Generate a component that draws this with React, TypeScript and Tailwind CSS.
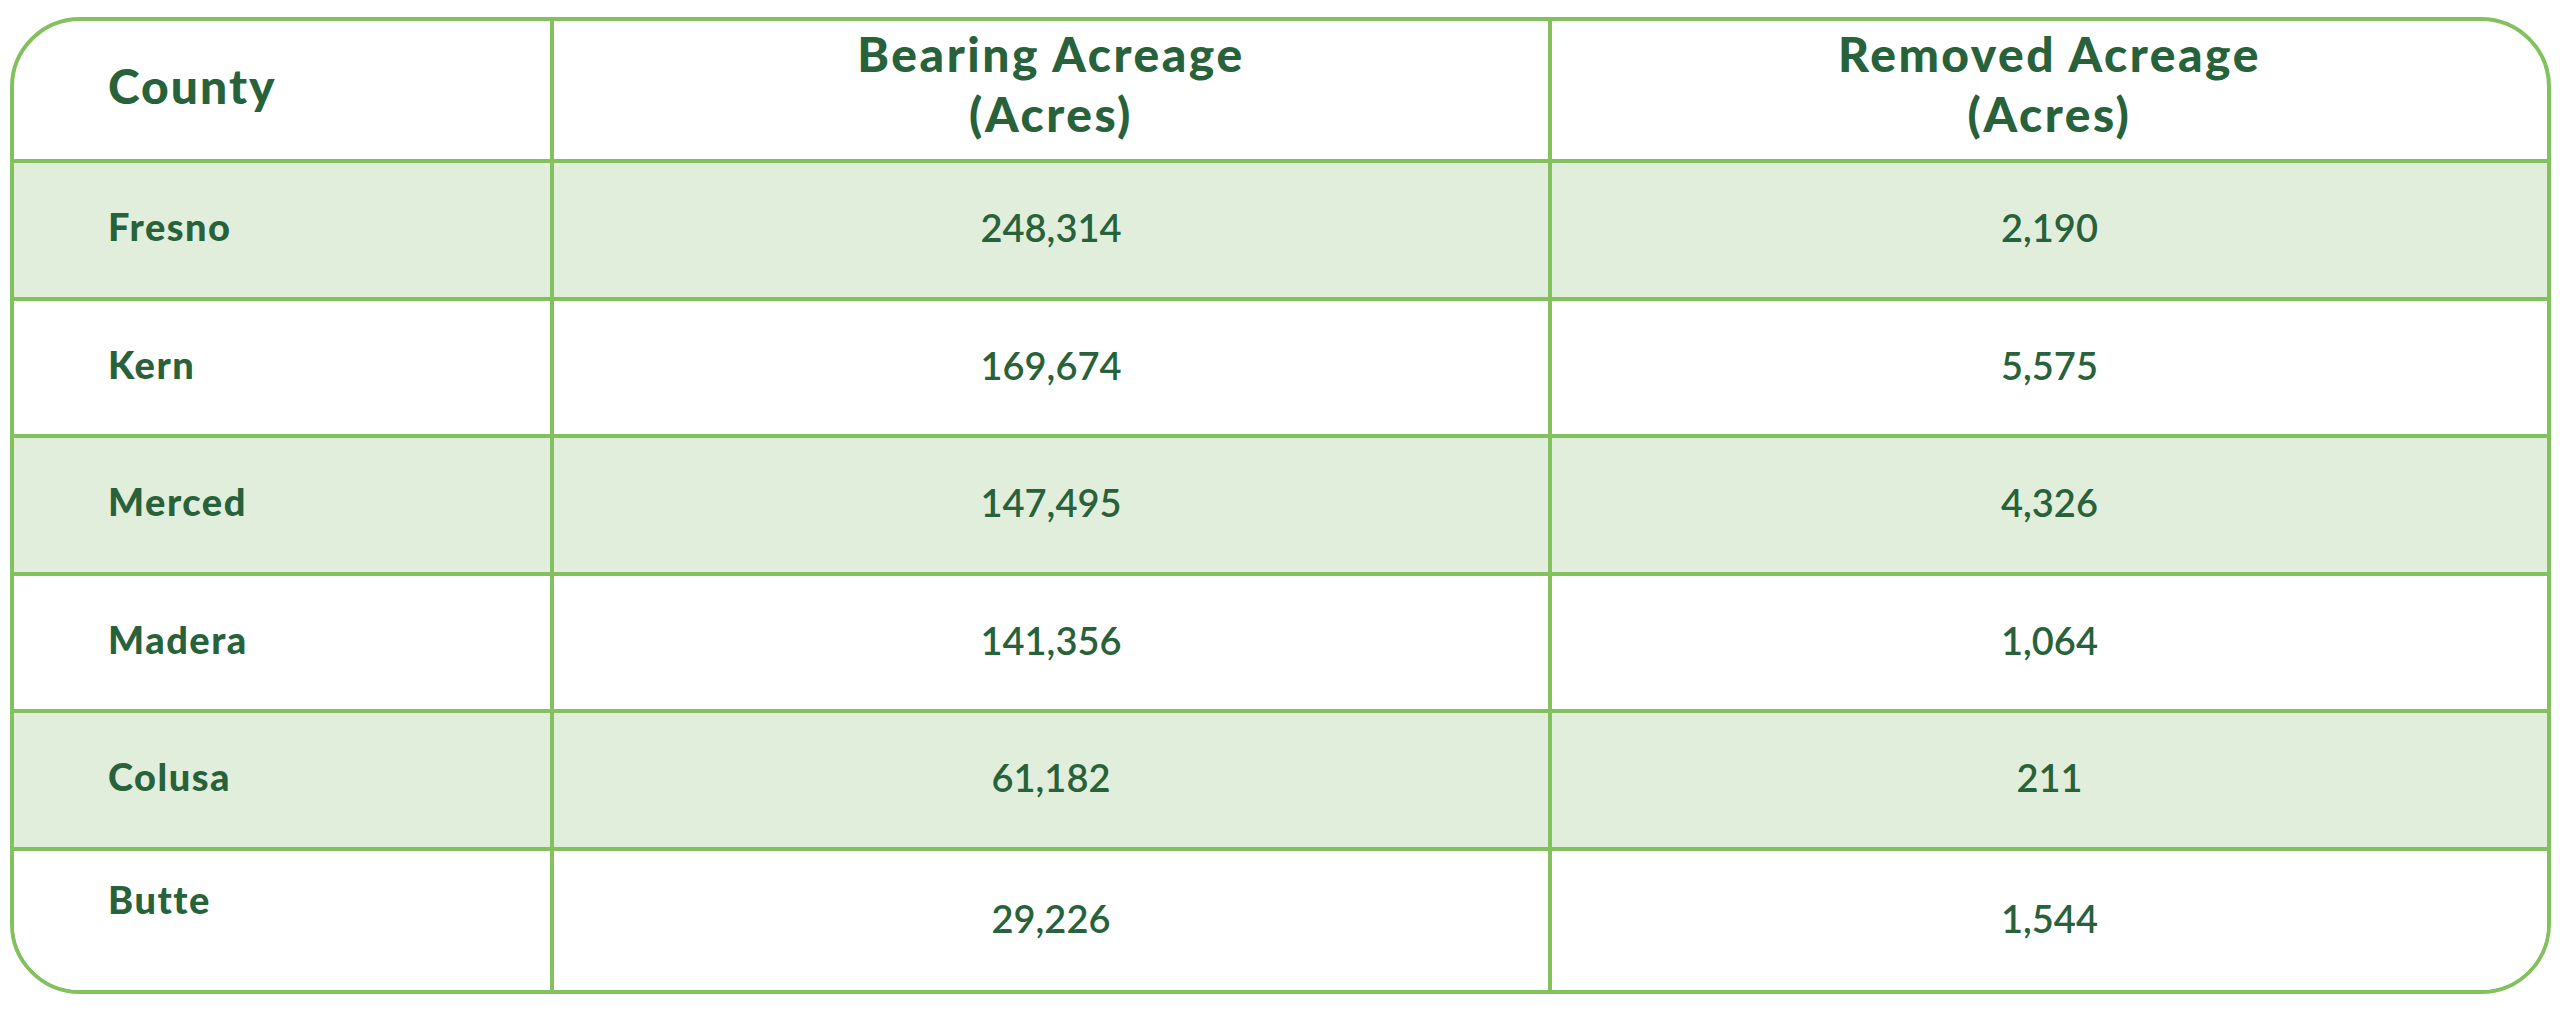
import React from 'react'

const rows = [
  { county: 'Fresno', bearing: '248,314', removed: '2,190' },
  { county: 'Kern', bearing: '169,674', removed: '5,575' },
  { county: 'Merced', bearing: '147,495', removed: '4,326' },
  { county: 'Madera', bearing: '141,356', removed: '1,064' },
  { county: 'Colusa', bearing: '61,182', removed: '211' },
  { county: 'Butte', bearing: '29,226', removed: '1,544' },
]

export default function App() {
  return (
    <div className="min-h-screen bg-white pt-[17px] pl-[10px] text-[#28623a]" style={{ fontFamily: 'Lato, "Open Sans", sans-serif' }}>
      <div className="w-[2541px] overflow-hidden rounded-[70px] border-[4px] border-[#83c15f]">
        {/* header */}
        <div className="grid h-[138px] grid-cols-[540px_998px_1fr]">
          <div className="flex items-center border-r-[4px] border-[#83c15f] pl-[94px] pb-[8px] text-[48px] font-black tracking-[2px]">County</div>
          <div className="flex flex-col items-center justify-center border-r-[4px] border-[#83c15f] pb-[12px] text-[48px] font-black leading-[60px] tracking-[2.5px]">
            <span>Bearing Acreage</span>
            <span>(Acres)</span>
          </div>
          <div className="flex flex-col items-center justify-center pb-[12px] text-[48px] font-black leading-[60px] tracking-[2.5px]">
            <span>Removed Acreage</span>
            <span>(Acres)</span>
          </div>
        </div>

        {rows.map((r, i) => {
          const last = i === rows.length - 1
          return (
            <div
              key={r.county}
              className={`grid grid-cols-[540px_998px_1fr] border-t-[4px] border-[#83c15f] ${i % 2 === 0 ? 'bg-[#e2eedc]' : 'bg-white'} ${last ? 'h-[143px]' : 'h-[137.5px]'}`}
            >
              <div className={`flex border-r-[4px] border-[#83c15f] pl-[94px] text-[38px] font-black tracking-[1.5px] ${last ? 'items-start pt-[20px]' : 'items-center pb-[6px]'}`}>
                {r.county}
              </div>
              <div className="flex items-center justify-center border-r-[4px] border-[#83c15f] pb-[4px] text-[38px] font-semibold">{r.bearing}</div>
              <div className="flex items-center justify-center pb-[4px] text-[38px] font-semibold">{r.removed}</div>
            </div>
          )
        })}
      </div>
    </div>
  )
}
